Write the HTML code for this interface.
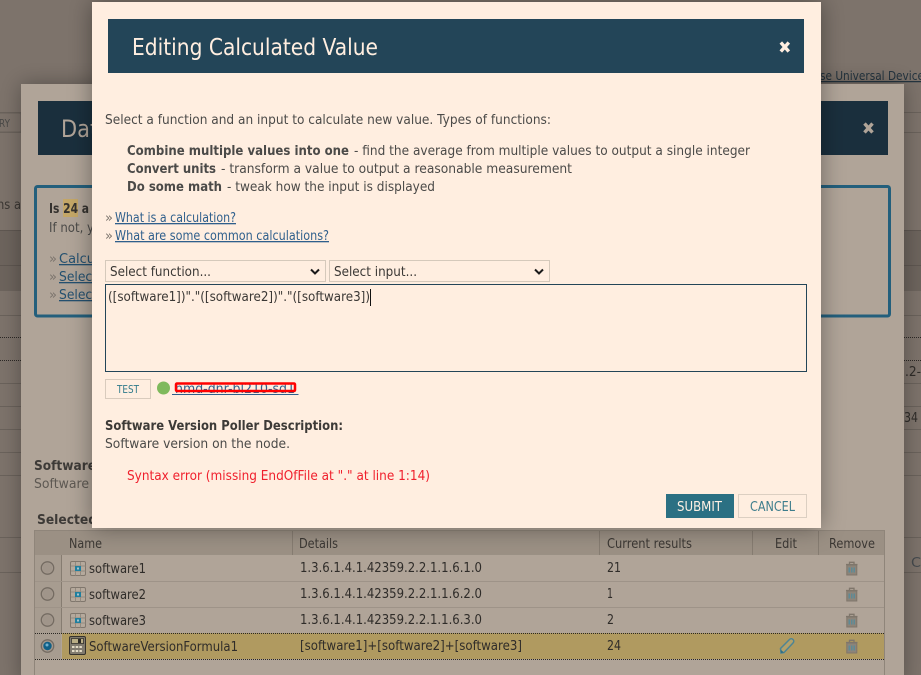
<!DOCTYPE html>
<html><head><meta charset="utf-8"><title>Editing Calculated Value</title>
<style>
html,body{margin:0;padding:0;background:#7d736b;overflow:hidden}
svg{display:block}
text{font-family:"DejaVu Sans",sans-serif;font-size:13px;fill:#4b4a48;white-space:pre}
.b{font-weight:bold}
.l{fill:#2f5f8c;text-decoration:underline}
.bl{fill:#24506f;text-decoration:underline}
.d{fill:#2f2c29}
.q{fill:#7a736c}
</style></head><body>
<svg xmlns="http://www.w3.org/2000/svg" width="921" height="675" viewBox="0 0 921 675">
<defs>
<filter id="s1" x="-10%" y="-10%" width="120%" height="120%"><feDropShadow dx="0" dy="0" stdDeviation="11" flood-color="#000" flood-opacity=".32"/></filter>
<filter id="s2" x="-10%" y="-10%" width="120%" height="120%"><feDropShadow dx="0" dy="0" stdDeviation="12" flood-color="#000" flood-opacity=".38"/></filter>
<g id="grid"><rect x=".5" y=".5" width="15" height="14" rx="1.500" fill="#b5a99c" stroke="#80776d"/><path d="M5.500 1V14.500M10.500 1V14.500M1 5H15.500M1 10H15.500" stroke="#938a7f" stroke-width="1" fill="none"/><rect x="5" y="5" width="6" height="5" fill="#1f7f9f"/><rect x="7" y="6.500" width="2" height="2" fill="#a9c5cc"/></g>
<g id="trash"><path d="M1 3.500H12.500M4.500 3V1.300H9V3" stroke="#7f766b" stroke-width="1.300" fill="none"/><rect x="1.800" y="4" width="10" height="10" fill="#8d8479" stroke="#7f766b"/><rect x="3.500" y="6.500" width="6.500" height="5" fill="#5d8a96"/><path d="M5.500 6.500V11.500M8 6.500V11.500" stroke="#8d8479"/></g>
<g id="radio"><circle cx="0" cy="0" r="6.200" fill="#a79c90" stroke="#746b62" stroke-width="1.300"/><circle cx="0" cy="0" r="5" fill="#a0958a"/></g>
</defs>

<!-- page background -->
<rect width="921" height="675" fill="#7d736b"/>
<rect x="0" y="230" width="921" height="61" fill="#6d645d"/>
<path d="M0 230.500H921M0 265.500H921" stroke="#5f5751"/>
<path d="M0 315.500H921M0 383.500H921M0 406.500H921M0 429.500H921M0 452.500H921M0 475.500H921M0 537.500H921M0 572.500H921M0 112.500H921M0 132.500H921" stroke="#6a625b"/>
<path d="M0 337.500H921M0 360.500H921" stroke="#2c2825" stroke-dasharray="1 1"/>
<rect x="-10" y="113" width="31" height="19" rx="2" fill="none" stroke="#6a625b"/>
<text x="-1" y="127" textLength="11" lengthAdjust="spacingAndGlyphs" style="font-size:11px">RY</text>
<text x="-3" y="209" textLength="24" lengthAdjust="spacingAndGlyphs" class="d" style="fill:#3b3733">ns a</text>
<text x="820" y="80" textLength="104" lengthAdjust="spacingAndGlyphs" class="bl" style="fill:#24343f;font-size:12.500px">se Universal Device</text>
<text x="905" y="376" class="d" textLength="16" lengthAdjust="spacingAndGlyphs">.2-</text>
<text x="904" y="422" class="d" textLength="14" lengthAdjust="spacingAndGlyphs">34</text>
<text x="911" y="567" style="fill:#454a4e" textLength="10" lengthAdjust="spacingAndGlyphs">C</text>

<!-- back dialog -->
<g filter="url(#s1)"><rect x="21" y="84" width="883" height="600" fill="#b0a498"/></g>
<rect x="38" y="101" width="850" height="54" fill="#1a2f3d"/>
<text x="61" y="137" style="font-size:24px;fill:#b0a498" textLength="50" lengthAdjust="spacingAndGlyphs">Data</text>
<path d="M864.500 123.500L872.500 132.500M872.500 123.500L864.500 132.500" stroke="#b0a498" stroke-width="3.400" fill="none"/>
<rect x="35.500" y="186.500" width="854" height="129.500" rx="2" fill="none" stroke="#235f7c" stroke-width="3"/>
<rect x="63" y="199" width="15" height="18" fill="#c4a767"/>
<text x="49" y="213" class="b" style="fill:#35322f" textLength="40" lengthAdjust="spacingAndGlyphs">Is 24 a</text>
<text x="49" y="232" textLength="45" lengthAdjust="spacingAndGlyphs">If not, y</text>
<text x="49" y="263" class="q">»</text><text x="59" y="263" class="bl" textLength="36" lengthAdjust="spacingAndGlyphs">Calcu</text>
<text x="49" y="281" class="q">»</text><text x="59" y="281" class="bl" textLength="38" lengthAdjust="spacingAndGlyphs">Select</text>
<text x="49" y="299" class="q">»</text><text x="59" y="299" class="bl" textLength="38" lengthAdjust="spacingAndGlyphs">Select</text>
<text x="34" y="470" class="b" textLength="62" lengthAdjust="spacingAndGlyphs" style="fill:#3d3a37">Software</text>
<text x="34" y="488" textLength="55" lengthAdjust="spacingAndGlyphs" style="fill:#5d5852">Software</text>
<text x="37" y="524" class="b" textLength="60" lengthAdjust="spacingAndGlyphs" style="fill:#3d3a37">Selected</text>

<!-- table -->
<rect x="34.500" y="530.500" width="850" height="160" fill="#b0a498" stroke="#8f857a"/>
<rect x="35" y="531" width="849" height="24" fill="#9b9084"/>
<rect x="35" y="555" width="26" height="104" fill="#a79c90"/>
<path d="M292.500 531V555M599.500 531V555M752.500 531V555M818.500 531V555M61.500 555V633" stroke="#867c71"/>
<path d="M35 581.500H884M35 607.500H884" stroke="#9e9388"/>
<rect x="62" y="633" width="822" height="26" fill="#b09a60"/>
<path d="M35 633.500H884M35 659.500H884" stroke="#2b2824" stroke-dasharray="1 1"/>
<text x="69" y="548" textLength="33" lengthAdjust="spacingAndGlyphs" style="fill:#3b3733">Name</text>
<text x="299" y="548" textLength="39" lengthAdjust="spacingAndGlyphs" style="fill:#3b3733">Details</text>
<text x="607" y="548" textLength="85" lengthAdjust="spacingAndGlyphs" style="fill:#3b3733">Current results</text>
<text x="775" y="548" textLength="22" lengthAdjust="spacingAndGlyphs" style="fill:#3b3733">Edit</text>
<text x="829" y="548" textLength="46" lengthAdjust="spacingAndGlyphs" style="fill:#3b3733">Remove</text>

<use href="#radio" x="47.500" y="568"/><use href="#radio" x="47.500" y="594"/><use href="#radio" x="47.500" y="620"/><use href="#radio" x="47.500" y="646"/>
<circle cx="47.500" cy="646" r="4.200" fill="#0f5f86"/><circle cx="47" cy="645" r="1.500" fill="#6fb0cf"/>
<use href="#grid" x="70" y="561"/><use href="#grid" x="70" y="587"/><use href="#grid" x="70" y="613"/>
<rect x="69.500" y="636.500" width="16" height="18" rx="1.500" fill="#807a6e" stroke="#35322d"/>
<rect x="71.500" y="638.500" width="12" height="5" fill="#b9ad85" stroke="#35322d" stroke-width=".8"/><rect x="78" y="639" width="3" height="4" fill="#2c2925"/>
<path d="M72 647h2.500M75.700 647h2.500M79.400 647h2.500M72 651h2.500M75.700 651h2.500M79.400 651h2.500" stroke="#e4dcc6" stroke-width="2"/>

<text x="89" y="573" class="d" textLength="57" lengthAdjust="spacingAndGlyphs">software1</text>
<text x="89" y="599" class="d" textLength="57" lengthAdjust="spacingAndGlyphs">software2</text>
<text x="89" y="625" class="d" textLength="57" lengthAdjust="spacingAndGlyphs">software3</text>
<text x="89" y="651" class="d" textLength="149" lengthAdjust="spacingAndGlyphs">SoftwareVersionFormula1</text>
<text x="300" y="572" class="d" textLength="182" lengthAdjust="spacingAndGlyphs">1.3.6.1.4.1.42359.2.2.1.1.6.1.0</text>
<text x="300" y="598" class="d" textLength="182" lengthAdjust="spacingAndGlyphs">1.3.6.1.4.1.42359.2.2.1.1.6.2.0</text>
<text x="300" y="624" class="d" textLength="182" lengthAdjust="spacingAndGlyphs">1.3.6.1.4.1.42359.2.2.1.1.6.3.0</text>
<text x="300" y="650" class="d" textLength="222" lengthAdjust="spacingAndGlyphs">[software1]+[software2]+[software3]</text>
<text x="607" y="572" class="d" textLength="14" lengthAdjust="spacingAndGlyphs">21</text>
<text x="607" y="598" class="d" textLength="6" lengthAdjust="spacingAndGlyphs">1</text>
<text x="607" y="624" class="d" textLength="7" lengthAdjust="spacingAndGlyphs">2</text>
<text x="607" y="650" class="d" textLength="14" lengthAdjust="spacingAndGlyphs">24</text>
<use href="#trash" x="845" y="561"/><use href="#trash" x="845" y="587"/><use href="#trash" x="845" y="613"/><use href="#trash" x="845" y="639"/>
<path d="M781 653L780.500 648.500L789.500 639.500C790.500 638.500 792 638.500 793 639.500C794 640.500 794 642 793 643L784 652.500Z" fill="#b3a16a" stroke="#4d8494" stroke-width="1.500"/>
<path d="M781 653L780.500 649.500L784 652.500Z" fill="#2f6f85"/>

<!-- modal -->
<g filter="url(#s2)"><rect x="92" y="2" width="729" height="526" fill="#ffeee0"/></g>
<rect x="108" y="19" width="696" height="54" fill="#234558"/>
<text x="132" y="55" style="font-size:23.500px;fill:#ffeee0" textLength="246" lengthAdjust="spacingAndGlyphs">Editing Calculated Value</text>
<path d="M780.800 42.500L788.800 51.500M788.800 42.500L780.800 51.500" stroke="#ffeee0" stroke-width="3.400" fill="none"/>

<text x="105" y="124" textLength="446" lengthAdjust="spacingAndGlyphs">Select a function and an input to calculate new value. Types of functions:</text>
<text x="127" y="155" class="b" textLength="222" lengthAdjust="spacingAndGlyphs">Combine multiple values into one</text>
<text x="354" y="155" textLength="396" lengthAdjust="spacingAndGlyphs">- find the average from multiple values to output a single integer</text>
<text x="127" y="173" class="b" textLength="89" lengthAdjust="spacingAndGlyphs">Convert units</text>
<text x="221" y="173" textLength="351" lengthAdjust="spacingAndGlyphs">- transform a value to output a reasonable measurement</text>
<text x="127" y="191" class="b" textLength="95" lengthAdjust="spacingAndGlyphs">Do some math</text>
<text x="227" y="191" textLength="208" lengthAdjust="spacingAndGlyphs">- tweak how the input is displayed</text>
<text x="105" y="222" class="q">»</text><text x="115" y="222" class="l" textLength="121" lengthAdjust="spacingAndGlyphs">What is a calculation?</text>
<text x="105" y="240" class="q">»</text><text x="115" y="240" class="l" textLength="214" lengthAdjust="spacingAndGlyphs">What are some common calculations?</text>

<rect x="105.500" y="260.500" width="220" height="21" fill="#ffeee0" stroke="#d5c9bb"/>
<text x="110" y="276" textLength="101" lengthAdjust="spacingAndGlyphs" style="fill:#3b3835">Select function...</text>
<path d="M311 269.500L315 273.500L319 269.500" stroke="#1a1a1a" stroke-width="2" fill="none"/>
<rect x="329.500" y="260.500" width="220" height="21" fill="#ffeee0" stroke="#d5c9bb"/>
<text x="334" y="276" textLength="83" lengthAdjust="spacingAndGlyphs" style="fill:#3b3835">Select input...</text>
<path d="M535 269.500L539 273.500L543 269.500" stroke="#1a1a1a" stroke-width="2" fill="none"/>

<rect x="105.500" y="284.500" width="701" height="87" fill="#ffeee0" stroke="#234558"/>
<text x="108" y="301" textLength="262" lengthAdjust="spacingAndGlyphs" style="fill:#3b3835">([software1])"."([software2])"."([software3])</text>
<path d="M370.500 289V306" stroke="#111"/>

<rect x="105.500" y="379.500" width="45" height="19" fill="#ffeee0" stroke="#d9cbbd"/>
<text x="117" y="393" textLength="22" lengthAdjust="spacingAndGlyphs" style="font-size:10.500px;fill:#2f7a8a">TEST</text>
<circle cx="163.500" cy="388" r="6.500" fill="#7fb95c"/>
<text x="175" y="393" textLength="120" lengthAdjust="spacingAndGlyphs" style="fill:#2f5f8c">hmd-dnr-bl210-sd1</text>
<path d="M172 394.500H298.500" stroke="#2f5f8c"/>
<rect x="176" y="383.500" width="119" height="7.500" rx="1" fill="none" stroke="#ff0000" stroke-width="2.500"/>

<text x="105" y="430" class="b" textLength="238" lengthAdjust="spacingAndGlyphs" style="fill:#3d3a37">Software Version Poller Description:</text>
<text x="105" y="448" textLength="185" lengthAdjust="spacingAndGlyphs">Software version on the node.</text>
<text x="127" y="480" textLength="303" lengthAdjust="spacingAndGlyphs" style="fill:#f01f2c">Syntax error (missing EndOfFile at "." at line 1:14)</text>

<rect x="666" y="494" width="68" height="24" fill="#2b7083"/>
<text x="677" y="511" textLength="45" lengthAdjust="spacingAndGlyphs" style="fill:#fff1e4;font-size:13px">SUBMIT</text>
<rect x="738.500" y="494.500" width="68" height="23" fill="#ffeee0" stroke="#dccfc2"/>
<text x="750" y="511" textLength="45" lengthAdjust="spacingAndGlyphs" style="fill:#3d7d8c;font-size:13px">CANCEL</text>
</svg>
</body></html>
